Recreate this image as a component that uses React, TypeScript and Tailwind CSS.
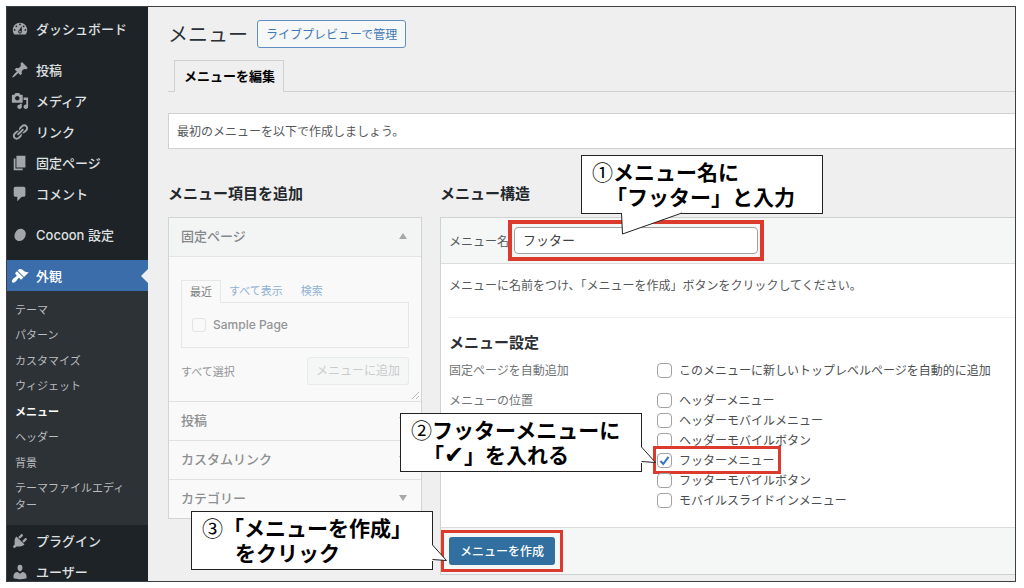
import React from "react";

const ICONS = {
  dashboard:
    "M3.76 16h12.48c1.1-1.37 1.76-3.11 1.76-5 0-4.42-3.58-8-8-8s-8 3.58-8 8c0 1.89.66 3.63 1.76 5zM10 4c.55 0 1 .45 1 1s-.45 1-1 1-1-.45-1-1 .45-1 1-1zM6 6c.55 0 1 .45 1 1s-.45 1-1 1-1-.45-1-1 .45-1 1-1zm8 0c.55 0 1 .45 1 1s-.45 1-1 1-1-.45-1-1 .45-1 1-1zm-5.37 5.55L12 7v6c0 1.1-.9 2-2 2s-2-.9-2-2c0-.57.24-1.08.63-1.45zM4 10c.55 0 1 .45 1 1s-.45 1-1 1-1-.45-1-1 .45-1 1-1zm12 0c.55 0 1 .45 1 1s-.45 1-1 1-1-.45-1-1 .45-1 1-1zm-5 3c0-.55-.45-1-1-1s-1 .45-1 1 .45 1 1 1 1-.45 1-1z",
  post: "M10.44 3.02l1.82-1.82 6.36 6.35-1.83 1.82c-1.05-.68-2.48-.57-3.41.36l-.75.75c-.92.93-1.04 2.35-.35 3.41l-1.83 1.82-2.41-2.41-2.8 2.79c-.42.42-3.38 2.71-3.8 2.29s1.86-3.39 2.28-3.81l2.79-2.79L4.1 9.36l1.83-1.82c1.05.69 2.48.57 3.4-.36l.75-.75c.93-.92 1.05-2.35.36-3.41z",
  media:
    "M13 11V4c0-.55-.45-1-1-1h-1.67L9 1H5L3.67 3H2c-.55 0-1 .45-1 1v7c0 .55.45 1 1 1h10c.55 0 1-.45 1-1zM7 4.5c1.38 0 2.5 1.12 2.5 2.5S8.38 9.5 7 9.5 4.5 8.38 4.5 7 5.62 4.5 7 4.5zM14 6h5v10.5c0 1.38-1.12 2.5-2.5 2.5S14 17.88 14 16.5s1.12-2.5 2.5-2.5c.17 0 .34.02.5.05V9h-3V6zm-4 8.05V13h2v3.5c0 1.38-1.12 2.5-2.5 2.5S7 17.88 7 16.5 8.12 14 9.5 14c.17 0 .34.02.5.05z",
  links:
    "M17.74 2.76c1.68 1.69 1.68 4.41 0 6.1l-1.53 1.52c-1.12 1.12-2.7 1.47-4.14 1.09l2.62-2.61.76-.77.76-.76c.84-.84.84-2.2 0-3.04-.84-.85-2.2-.85-3.04 0l-.77.76-3.38 3.38c-.37-1.44-.02-3.02 1.1-4.14l1.52-1.53c1.69-1.68 4.42-1.68 6.1 0zM8.59 13.43l5.34-5.34c.42-.42.42-1.1 0-1.52-.44-.43-1.13-.39-1.53 0l-5.33 5.34c-.42.42-.42 1.1 0 1.52.44.43 1.13.39 1.52 0zm-.76 2.29l4.14-4.15c.38 1.44.03 3.02-1.09 4.14l-1.52 1.53c-1.69 1.68-4.41 1.68-6.1 0-1.68-1.68-1.68-4.42 0-6.1l1.53-1.52c1.12-1.12 2.7-1.47 4.14-1.1l-4.14 4.15c-.85.84-.85 2.2 0 3.05.84.84 2.2.84 3.04 0z",
  page: "M6 15V2h10v13H6zm-1 1h8v2H3V5h2v11z",
  comments:
    "M5 2h9c1.1 0 2 .9 2 2v7c0 1.1-.9 2-2 2h-2l-5 5v-5H5c-1.1 0-2-.9-2-2V4c0-1.1.9-2 2-2z",
  cocoon:
    "M13 3.6C16.4 5 17.3 8.500 15.600 12.200C13.900 15.900 10.400 17.700 7.200 16.300C4 14.900 3 11.400 4.600 7.800C6.200 4.200 9.800 2.300 13 3.600z",
  appearance:
    "M14.48 11.06L7.41 3.99l1.5-1.5c.5-.56 2.3-.47 3.51.32 1.21.8 1.43 1.28 2.91 2.1 1.18.64 2.45 1.26 4.45.85zm-.71.71L6.7 4.7 4.93 6.47c-.39.39-.39 1.02 0 1.41l1.06 1.06c.39.39.39 1.03 0 1.42-.6.6-1.43 1.11-2.21 1.69-.35.26-.7.53-1.01.84C1.43 14.23.4 16.08 1.4 17.07c.99 1 2.84-.03 4.18-1.36.31-.31.58-.66.85-1.02.57-.78 1.08-1.61 1.69-2.21.39-.39 1.02-.39 1.41 0l1.06 1.06c.39.39 1.02.39 1.41 0z",
  plugins:
    "M13.11 4.36L9.87 7.6 8 5.73l3.24-3.24c.35-.34 1.05-.2 1.56.32.52.51.66 1.21.31 1.55zm-8 1.77l.91-1.12 9.01 9.01-1.19.84c-.71.71-2.63 1.16-3.82 1.16H6.14L4.9 17.26c-.59.59-1.54.59-2.12 0-.59-.58-.59-1.53 0-2.12l1.24-1.24v-3.88c0-1.13.4-3.19 1.09-3.89zm7.26 3.97l3.24-3.24c.34-.35 1.04-.21 1.55.31.52.51.66 1.21.31 1.55l-3.24 3.25z",
  users:
    "M10 9.25c-2.27 0-2.73-3.44-2.73-3.44C7 4.02 7.82 2 9.97 2c2.16 0 2.98 2.02 2.71 3.81 0 0-.41 3.44-2.68 3.44zm0 2.57L12.72 10c2.39 0 4.52 2.33 4.52 4.53v2.49s-3.65 1.13-7.24 1.13c-3.65 0-7.24-1.13-7.24-1.13v-2.49c0-2.25 1.94-4.48 4.47-4.48z",
};

type IconName = keyof typeof ICONS;

function NavItem({ icon, label, current }: { icon: IconName; label: string; current?: boolean }) {
  return (
    <a
      href="#"
      aria-current={current ? "page" : undefined}
      className={
        "relative flex h-[31px] shrink-0 items-center gap-[7px] pl-1 font-[Inter,'Noto_Sans_CJK_JP',sans-serif] text-[13px] leading-5 font-medium " +
        (current ? "bg-[#3b6dab] text-white" : "text-[#dfe0e1]")
      }
    >
      <svg
        viewBox="0 0 20 20"
        fill="currentColor"
        className={"size-[18px] shrink-0 " + (current ? "text-white" : "text-[#a3a7ab]")}
      >
        <path d={ICONS[icon]} />
      </svg>
      <span className="whitespace-nowrap">{label}</span>
      {current && (
        <svg viewBox="0 0 7 14" className="absolute top-[9px] right-0 h-[14px] w-[7px] fill-[#efefef]">
          <path d="M7 0v14L0 7z" />
        </svg>
      )}
    </a>
  );
}

const SUBMENU = ["テーマ", "パターン", "カスタマイズ", "ウィジェット", "メニュー", "ヘッダー", "背景", "テーマファイルエディター"];

function Sidebar() {
  return (
    <nav className="flex w-[141px] shrink-0 flex-col bg-[#1e2327] pt-[6px]">
      <NavItem icon="dashboard" label="ダッシュボード" />
      <div className="mt-[10px] flex flex-col">
        <NavItem icon="post" label="投稿" />
        <NavItem icon="media" label="メディア" />
        <NavItem icon="links" label="リンク" />
        <NavItem icon="page" label="固定ページ" />
        <NavItem icon="comments" label="コメント" />
      </div>
      <div className="my-[10px] flex flex-col">
        <NavItem icon="cocoon" label="Cocoon 設定" />
      </div>
      <NavItem icon="appearance" label="外観" current />
      <ul className="flex min-h-[234px] shrink-0 flex-col justify-between bg-[#2d3236] pt-[10px] pr-4 pb-3 pl-2 text-[11px] leading-[17px]">
        {SUBMENU.map((name) => (
          <li key={name}>
            <a
              href="#"
              className={"block break-all " + (name === "メニュー" ? "font-bold text-white" : "text-[#b9bcbf]")}
            >
              {name}
            </a>
          </li>
        ))}
      </ul>
      <NavItem icon="plugins" label="プラグイン" />
      <NavItem icon="users" label="ユーザー" />
    </nav>
  );
}

function Caret({ up }: { up?: boolean }) {
  return (
    <svg viewBox="0 0 8 6" className="h-[6px] w-2 fill-[#a5a7a9]">
      <path d={up ? "M4 0l4 6H0z" : "M0 0h8L4 6z"} />
    </svg>
  );
}

function AddItems() {
  return (
    <section className="w-[254px] shrink-0">
      <h2 className="mb-3 text-[15px] leading-6 font-bold text-[#23282d]">メニュー項目を追加</h2>
      <div className="border border-[#d3d4d5] bg-[#f9f9f9] text-[11px] text-[#929496]">
        <button
          type="button"
          className="flex h-[38px] w-full items-center justify-between bg-[#f3f5f5] pr-[14px] pb-[2px] pl-3 text-[13px] font-medium text-[#85878a]"
        >
          固定ページ
          <Caret up />
        </button>
        <div className="relative border-t border-[#e3e4e5] px-3 pt-[23px] pb-4">
          <div className="flex items-end">
            <a
              href="#"
              className="-mb-px flex h-[23px] items-center border border-b-0 border-[#e6e7e7] bg-[#f9f9f9] px-2 pb-[2px] text-[#7d7f81]"
            >
              最近
            </a>
            <a href="#" className="ml-2 flex h-[22px] items-center pb-[2px] text-[#8fb1d3]">
              すべて表示
            </a>
            <a href="#" className="ml-[18px] flex h-[22px] items-center pb-[2px] text-[#8fb1d3]">
              検索
            </a>
          </div>
          <div className="border border-[#e6e7e7] py-[13px] pl-[10px]">
            <label className="flex h-[18px] items-center gap-[7px] font-[Inter,'Noto_Sans_CJK_JP',sans-serif] text-[12px] font-medium">
              <input type="checkbox" className="size-[14px] appearance-none rounded-[3px] border border-[#e2e3e4]" />
              Sample Page
            </label>
          </div>
          <div className="mt-[9px] flex items-center justify-between">
            <span>すべて選択</span>
            <button
              type="button"
              className="h-7 rounded-[3px] border border-[#e6eaea] bg-[#f5f7f7] px-2 pb-[2px] text-[12px] text-[#cacccc]"
            >
              メニューに追加
            </button>
          </div>
          <svg viewBox="0 0 9 9" className="absolute right-px bottom-px size-[9px] stroke-[#b5b7b8]" fill="none">
            <path d="M1 8L8 1M5 8l3-3" />
          </svg>
        </div>
        {["投稿", "カスタムリンク", "カテゴリー"].map((name) => (
          <button
            key={name}
            type="button"
            className="flex h-[39px] w-full items-center justify-between border-t border-[#e0e1e2] pr-[14px] pb-[2px] pl-3 text-[13px] font-medium text-[#8d8f91]"
          >
            {name}
            <Caret />
          </button>
        ))}
      </div>
    </section>
  );
}

function Option({ label, checked, marked }: { label: string; checked?: boolean; marked?: boolean }) {
  return (
    <div className="flex h-5">
      <label className="relative flex items-center gap-[7px] whitespace-nowrap text-[#4b4e51]">
        <span className="relative flex">
          <input
            type="checkbox"
            defaultChecked={checked}
            className="peer size-[15px] appearance-none rounded-[4px] border border-[#9fa1a4] bg-white"
          />
          <svg
            viewBox="0 0 15 15"
            fill="none"
            className="pointer-events-none absolute inset-0 hidden size-[15px] stroke-[#3a72c4] stroke-2 peer-checked:block"
          >
            <path d="M3.500 8l2.800 3L11.500 3.800" />
          </svg>
        </span>
        {label}
        {marked && <span className="absolute -top-1 -right-[6px] -bottom-1 -left-1 border-3 border-[#db3a2c]" />}
      </label>
    </div>
  );
}

function MenuStructure() {
  return (
    <section className="min-w-0 flex-1">
      <h2 className="mb-3 text-[15px] leading-6 font-bold text-[#23282d]">メニュー構造</h2>
      <form className="border border-r-0 border-[#cfd0d2] bg-white text-[12px] text-[#55585b]">
        <div className="flex items-center gap-[5px] border-b border-[#dcdcde] bg-[#f5f7f7] py-[9px] pl-2">
          <label htmlFor="menu-name" className="whitespace-nowrap">
            メニュー名
          </label>
          <div className="relative w-[244px]">
            <input
              id="menu-name"
              type="text"
              defaultValue="フッター"
              className="block h-[27px] w-full rounded-[4px] border border-[#9fa1a4] bg-white px-2 pb-[2px] text-[13px] text-[#3f4245]"
            />
            <span className="pointer-events-none absolute -inset-x-[6px] -inset-y-[7px] border-4 border-[#db3a2c]" />
          </div>
        </div>
        <div className="pt-[11px] pb-[17px] pl-2">
          <p className="leading-5">メニューに名前をつけ、「メニューを作成」ボタンをクリックしてください。</p>
          <hr className="mt-[22px] border-[#eeeeee]" />
          <h3 className="mt-3 text-[15px] leading-6 font-bold text-[#2c3034]">メニュー設定</h3>
          <div className="mt-[6px] grid grid-cols-[208px_1fr] gap-y-[10px] leading-5">
            <span className="text-[#707376]">固定ページを自動追加</span>
            <Option label="このメニューに新しいトップレベルページを自動的に追加" />
            <span className="text-[#707376]">メニューの位置</span>
            <div>
              <Option label="ヘッダーメニュー" />
              <Option label="ヘッダーモバイルメニュー" />
              <Option label="ヘッダーモバイルボタン" />
              <Option label="フッターメニュー" checked marked />
              <Option label="フッターモバイルボタン" />
              <Option label="モバイルスライドインメニュー" />
            </div>
          </div>
        </div>
        <div className="flex border-t border-[#dcdcde] bg-[#f5f7f7] py-[9px] pl-2">
          <div className="relative">
            <button type="button" className="h-7 rounded-[3px] bg-[#306f9f] px-[11px] text-[12px] font-medium text-white">
              メニューを作成
            </button>
            <span className="pointer-events-none absolute -inset-x-2 -inset-y-[7px] border-3 border-[#db3a2c]" />
          </div>
        </div>
      </form>
    </section>
  );
}

function Callout({ place, children, tail }: { place: string; children: React.ReactNode; tail: React.ReactNode }) {
  return (
    <div className={"absolute w-[242px] " + place}>
      <div className="border border-[#222222] bg-white pt-[3px] pb-1 pl-[10px] text-[21px] leading-[25px] font-bold whitespace-nowrap text-black">
        {children}
      </div>
      {tail}
    </div>
  );
}

function SideTail() {
  return (
    <svg
      viewBox="0 0 16 18"
      className="absolute top-[34px] left-[241px] h-[18px] w-4 overflow-visible fill-white stroke-[#222222]"
    >
      <path d="M0 0v16" stroke="white" strokeWidth="2" />
      <path d="M.5 0L14.500 15.500L.5 14.500" />
    </svg>
  );
}

export default function App() {
  return (
    <div className="h-screen bg-white py-[6px] pr-2 pl-[6px] font-['Noto_Sans_CJK_JP',sans-serif]">
      <div className="relative flex h-full overflow-hidden border border-[#3c3f41] bg-[#efefef]">
        <Sidebar />
        <main className="min-w-0 flex-1 pt-[13px] pl-5">
          <div className="flex items-center gap-[9px]">
            <h1 className="text-[20px] leading-7 text-[#2c3034]">メニュー</h1>
            <a
              href="#"
              className="flex h-7 items-center rounded-[3px] border border-[#5f8fc0] bg-[#f6f7f7] px-2 text-[12px] text-[#4179b5]"
            >
              ライブプレビューで管理
            </a>
          </div>
          <nav className="mt-3 flex border-b border-[#cfd0d2] pl-[6px]">
            <a
              href="#"
              className="-mb-px flex h-8 items-center border border-b-0 border-[#cfd0d2] bg-[#efefef] px-2 pb-[2px] pl-[9px] text-[13px] font-bold text-black"
            >
              メニューを編集
            </a>
          </nav>
          <div className="mt-[21px] border border-r-0 border-[#cfd0d2] bg-white py-[7px] pl-2 text-[12px] leading-5 text-[#55585b]">
            最初のメニューを以下で作成しましょう。
          </div>
          <div className="mt-8 flex items-start gap-[18px]">
            <AddItems />
            <MenuStructure />
          </div>
        </main>

        <Callout
          place="left-[574px] top-[148px]"
          tail={
            <svg
              viewBox="0 0 62 23"
              className="absolute top-[57px] left-[40px] h-[23px] w-[62px] overflow-visible fill-white stroke-[#222222]"
            >
              <path d="M1 .5h59" stroke="white" strokeWidth="3" />
              <path d="M.5 1L1.500 22L61 1" />
            </svg>
          }
        >
          <p>
            <span className="font-normal">①</span>メニュー名に
          </p>
          <p className="pl-[14px]">「フッター」と入力</p>
        </Callout>
        <Callout place="left-[393px] top-[406px]" tail={<SideTail />}>
          <p>
            <span className="font-normal">②</span>フッターメニューに
          </p>
          <p className="pl-3">
            「<span className="font-['DejaVu_Sans'] text-[24px] leading-none">✔</span>」を入れる
          </p>
        </Callout>
        <Callout place="left-[184px] top-[504px]" tail={<SideTail />}>
          <p>
            <span className="font-normal">③</span>「メニューを作成」
          </p>
          <p className="pl-[33px]">をクリック</p>
        </Callout>
      </div>
    </div>
  );
}
